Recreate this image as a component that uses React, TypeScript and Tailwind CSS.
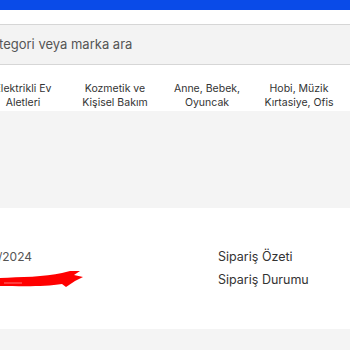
export default function App() {
  const cats = [
    ["Elektrikli Ev", "Aletleri"],
    ["Kozmetik ve", "Kişisel Bakım"],
    ["Anne, Bebek,", "Oyuncak"],
    ["Hobi, Müzik", "Kırtasiye, Ofis"],
  ];
  return (
    <div className="w-[350px] h-[350px] overflow-hidden bg-white font-['Inter',sans-serif]">
      <div className="h-[10px] bg-[#0a4be8]" />
      <div className="h-[14px] bg-white" />
      <div className="h-[41px] bg-[#f3f3f3] border-y border-[#d6d6d6] flex items-center overflow-hidden">
        <span className="text-[13px] text-[#555] whitespace-nowrap ml-[-17px]">Kategori veya marka ara</span>
      </div>
      <div className="h-[46px] flex items-center ml-[-23px] pt-[16px]">
        {cats.map((c) => (
          <div key={c[0]} className="w-[92px] shrink-0 text-center text-[10.5px] leading-[14px] text-[#333]">
            <div>{c[0]}</div>
            <div>{c[1]}</div>
          </div>
        ))}
      </div>
      <div className="h-[97px] bg-[#f4f4f4]" />
      <div className="h-[121px] flex pt-[41px]">
        <div className="w-[218px] flex flex-col gap-[3px] overflow-hidden">
          <span className="text-[12px] text-[#555] leading-[16px] ml-[-31px] whitespace-nowrap">15/01/2024</span>
          <svg width="84" height="22" viewBox="0 0 84 22">
            <path d="M0 10 C20 9 45 9 62 5 L70 3 L80 3 L74 7 L83 9 L75 13 L66 19 L62 16 C45 19 20 18 0 18 Z" fill="#f00" />
            <path d="M4 15 L22 15" stroke="#f77" strokeWidth="1" />
          </svg>
        </div>
        <div className="flex flex-col gap-[7px] text-[12.5px] text-[#333] leading-[16px]">
          <span>Sipariş Özeti</span>
          <span>Sipariş Durumu</span>
        </div>
      </div>
      <div className="h-[30px] bg-[#f4f4f4]" />
    </div>
  );
}
